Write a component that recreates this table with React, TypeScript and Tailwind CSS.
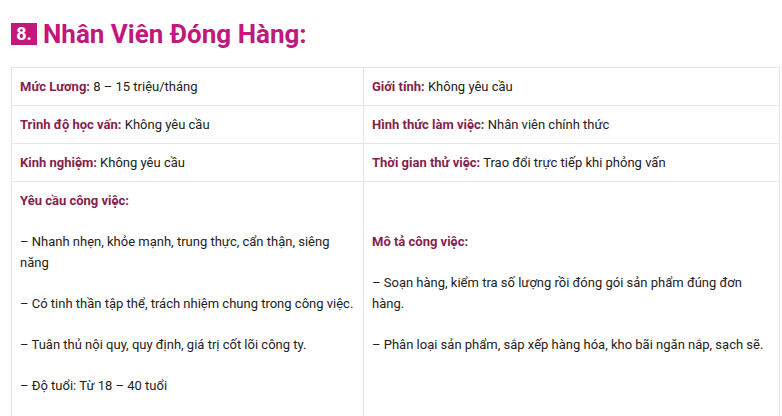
import React from "react";

const Label = ({ children }: { children: React.ReactNode }) => (
  <strong className="font-bold text-[#861e4e]">{children}</strong>
);

export default function App() {
  const cell = "border border-[#e6e6e6] px-[8px] py-[8px] align-middle";
  return (
    <div className="w-[782px] h-[416px] overflow-hidden bg-white text-[#222] font-['Roboto',sans-serif]">
      <h2 className="flex items-center pl-[11px] pt-[17px] h-[50px] text-[26px] leading-[30px] font-bold text-[#c2177c]">
        <span className="inline-flex items-center justify-center w-[26px] h-[22px] bg-[#c2177c] text-white text-[18px] leading-none mr-[6px]">
          8.
        </span>
        <span>Nhân Viên Đóng Hàng:</span>
      </h2>
      <table className="ml-[11px] mt-[17px] w-[768px] border-collapse text-[13px] leading-[21px] table-fixed">
        <colgroup>
          <col className="w-[352px]" />
          <col className="w-[416px]" />
        </colgroup>
        <tbody>
          <tr>
            <td className={cell}>
              <Label>Mức Lương:</Label> 8 – 15 triệu/tháng
            </td>
            <td className={cell}>
              <Label>Giới tính:</Label> Không yêu cầu
            </td>
          </tr>
          <tr>
            <td className={cell}>
              <Label>Trình độ học vấn:</Label> Không yêu cầu
            </td>
            <td className={cell}>
              <Label>Hình thức làm việc:</Label> Nhân viên chính thức
            </td>
          </tr>
          <tr>
            <td className={cell}>
              <Label>Kinh nghiệm:</Label> Không yêu cầu
            </td>
            <td className={cell}>
              <Label>Thời gian thử việc:</Label> Trao đổi trực tiếp khi phỏng vấn
            </td>
          </tr>
          <tr>
            <td className={cell}>
              <p className="mb-[20px]"><Label>Yêu cầu công việc:</Label></p>
              <p className="mb-[20px]">– Nhanh nhẹn, khỏe mạnh, trung thực, cẩn thận, siêng năng</p>
              <p className="mb-[20px]">– Có tinh thần tập thể, trách nhiệm chung trong công việc.</p>
              <p className="mb-[20px]">– Tuân thủ nội quy, quy định, giá trị cốt lõi công ty.</p>
              <p className="mb-[20px]">– Độ tuổi: Từ 18 – 40 tuổi</p>
            </td>
            <td className={cell}>
              <p className="mb-[20px]"><Label>Mô tả công việc:</Label></p>
              <p className="mb-[20px]">– Soạn hàng, kiểm tra số lượng rồi đóng gói sản phẩm đúng đơn hàng.</p>
              <p className="mb-[20px]">– Phân loại sản phẩm, sắp xếp hàng hóa, kho bãi ngăn nắp, sạch sẽ.</p>
            </td>
          </tr>
        </tbody>
      </table>
    </div>
  );
}
